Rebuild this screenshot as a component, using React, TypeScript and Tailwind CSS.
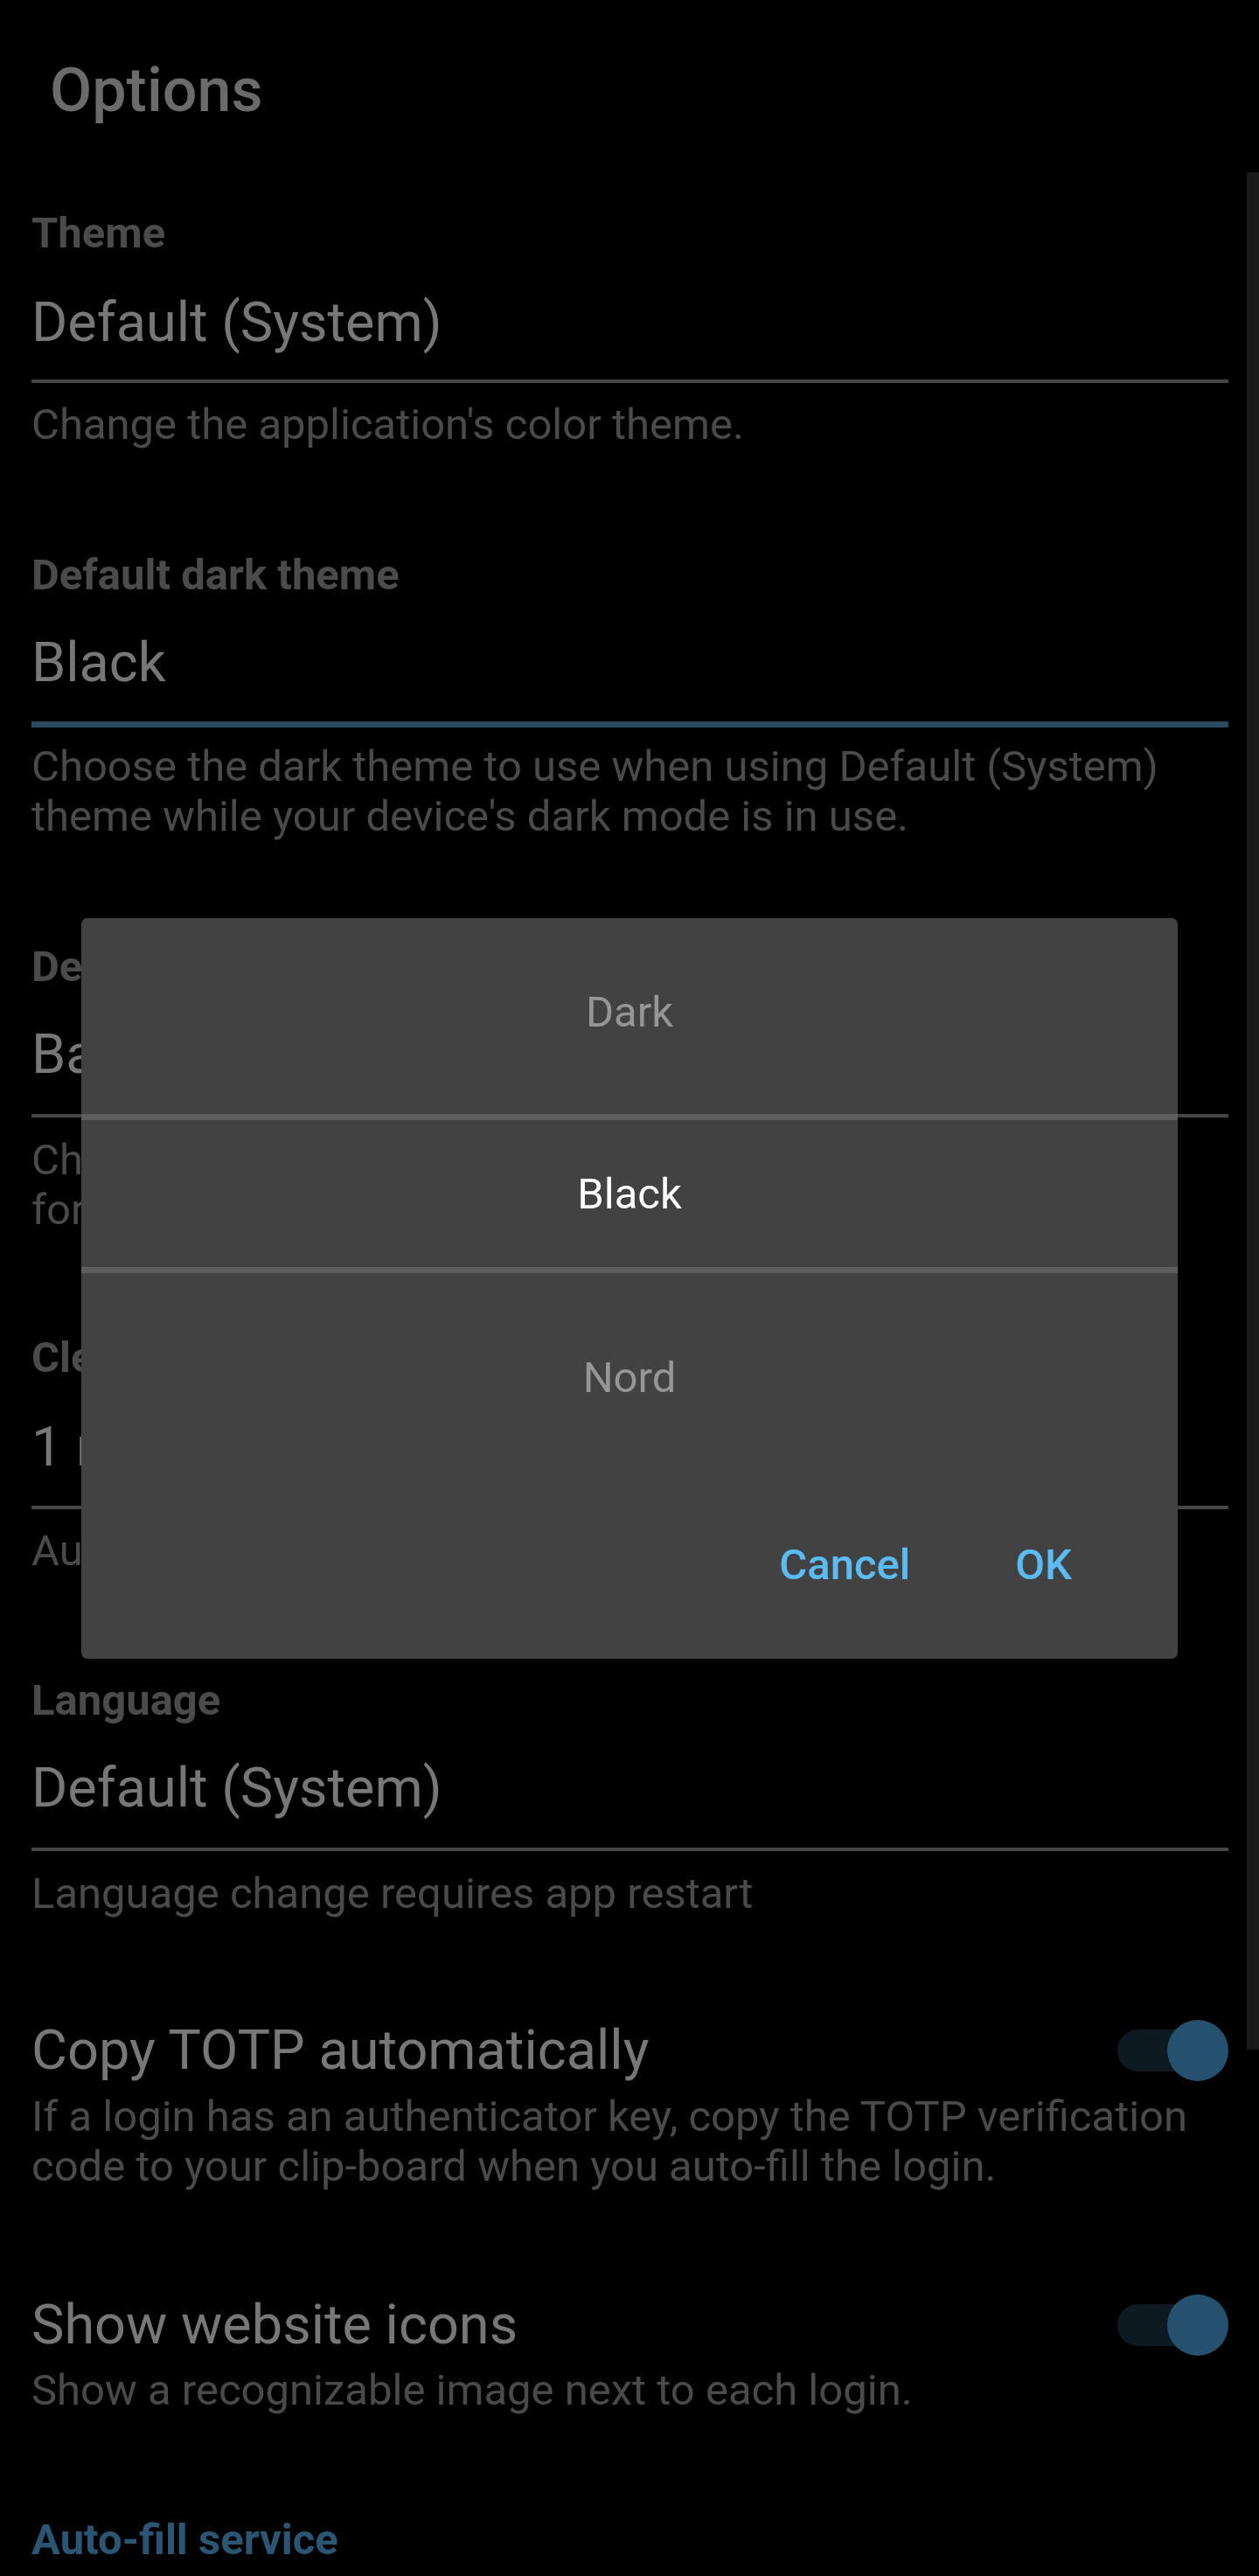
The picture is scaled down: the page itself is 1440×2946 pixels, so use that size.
import React from "react";

type FieldProps = {
  label: string;
  value: string;
  desc: string[];
  focused?: boolean;
  labelMt: string;
  valueMt: string;
  divMt: string;
  descMt: string;
};

function Field({ label, value, desc, focused, labelMt, valueMt, divMt, descMt }: FieldProps) {
  return (
    <section className={labelMt}>
      <div className="text-[49px] leading-[57px] font-bold text-[#4b4b4b] whitespace-nowrap">{label}</div>
      <div className={`${valueMt} text-[63px] leading-[74px] text-[#777777] whitespace-nowrap`}>{value}</div>
      {focused ? (
        <div className={`${divMt} h-[7px] bg-[#2b4a5e]`} />
      ) : (
        <div className={`${divMt} h-[4px] bg-[#464646]`} />
      )}
      <div className={`${descMt} text-[49px] leading-[57px] text-[#4a4a4a]`}>
        {desc.map((l, i) => (
          <div key={i} className="whitespace-nowrap">
            {l}
          </div>
        ))}
      </div>
    </section>
  );
}

function Toggle() {
  return (
    <div className="relative w-[127px] h-[70px] shrink-0">
      <div className="absolute left-0 top-[11px] w-[112px] h-[48px] rounded-full bg-[#0e1a22]" />
      <div className="absolute right-0 top-0 w-[70px] h-[70px] rounded-full bg-[#26516e]" />
    </div>
  );
}

type SwitchProps = { title: string; desc: string[]; mt: string; descMt: string };

function SwitchRow({ title, desc, mt, descMt }: SwitchProps) {
  return (
    <section className={mt}>
      <div className="flex items-center justify-between">
        <div className="text-[63px] leading-[74px] text-[#777777] whitespace-nowrap">{title}</div>
        <Toggle />
      </div>
      <div className={`${descMt} text-[49px] leading-[57px] text-[#4a4a4a]`}>
        {desc.map((l, i) => (
          <div key={i} className="whitespace-nowrap">
            {l}
          </div>
        ))}
      </div>
    </section>
  );
}

export default function App() {
  return (
    <div className="relative w-[1440px] h-[2946px] overflow-hidden bg-black font-['Roboto','Liberation_Sans',sans-serif]">
      <div className="pl-[36px] pr-[35px]">
        <h1 className="ml-[21px] mt-[62px] text-[70px] leading-[82px] font-medium text-[#6b6b6b]">Options</h1>

        <Field
          label="Theme"
          value="Default (System)"
          desc={["Change the application's color theme."]}
          labelMt="mt-[94px]"
          valueMt="mt-[37px]"
          divMt="mt-[28px]"
          descMt="mt-[19px]"
        />
        <Field
          label="Default dark theme"
          value="Black"
          focused
          desc={[
            "Choose the dark theme to use when using Default (System)",
            "theme while your device's dark mode is in use.",
          ]}
          labelMt="mt-[115px]"
          valueMt="mt-[35px]"
          divMt="mt-[30px]"
          descMt="mt-[16px]"
        />
        <Field
          label="Default URI match detection"
          value="Base domain"
          desc={[
            "Choose the default way that URI match detection is handled",
            "for logins when performing actions such as auto-fill.",
          ]}
          labelMt="mt-[115px]"
          valueMt="mt-[35px]"
          divMt="mt-[31px]"
          descMt="mt-[20px]"
        />
        <Field
          label="Clear clipboard"
          value="1 minute"
          desc={["Automatically clear copied values from your clipboard."]}
          labelMt="mt-[112px]"
          valueMt="mt-[37px]"
          divMt="mt-[30px]"
          descMt="mt-[19px]"
        />
        <Field
          label="Language"
          value="Default (System)"
          desc={["Language change requires app restart"]}
          labelMt="mt-[114px]"
          valueMt="mt-[35px]"
          divMt="mt-[31px]"
          descMt="mt-[20px]"
        />

        <SwitchRow
          title="Copy TOTP automatically"
          desc={[
            "If a login has an authenticator key, copy the TOTP verification",
            "code to your clip-board when you auto-fill the login.",
          ]}
          mt="mt-[114px]"
          descMt="mt-[10px]"
        />
        <SwitchRow
          title="Show website icons"
          desc={["Show a recognizable image next to each login."]}
          mt="mt-[116px]"
          descMt="mt-[9px]"
        />

        <div className="mt-[114px] text-[49px] leading-[57px] font-bold text-[#2a5673] whitespace-nowrap">
          Auto-fill service
        </div>
      </div>

      {/* scrollbar */}
      <div className="absolute left-[1426px] top-[197px] w-[14px] h-[2147px] bg-[#1a1a1a]" />

      {/* picker dialog */}
      <div className="absolute left-[93px] top-[1050px] w-[1254px] h-[847px] rounded-[7px] bg-[#424242] flex flex-col text-[49px] leading-[57px]">
        <div className="h-[224px] pb-[10px] flex items-center justify-center text-[#969696]">Dark</div>
        <div className="h-[7px] bg-[#5e5e5e]" />
        <div className="h-[168px] flex items-center justify-center text-white">Black</div>
        <div className="h-[7px] bg-[#5e5e5e]" />
        <div className="h-[239px] flex items-center justify-center text-[#969696]">Nord</div>
        <div className="flex justify-end pr-[121px] pt-[66px] font-medium text-[#5bbcf4]">
          <span>Cancel</span>
          <span className="ml-[120px]">OK</span>
        </div>
      </div>
    </div>
  );
}
